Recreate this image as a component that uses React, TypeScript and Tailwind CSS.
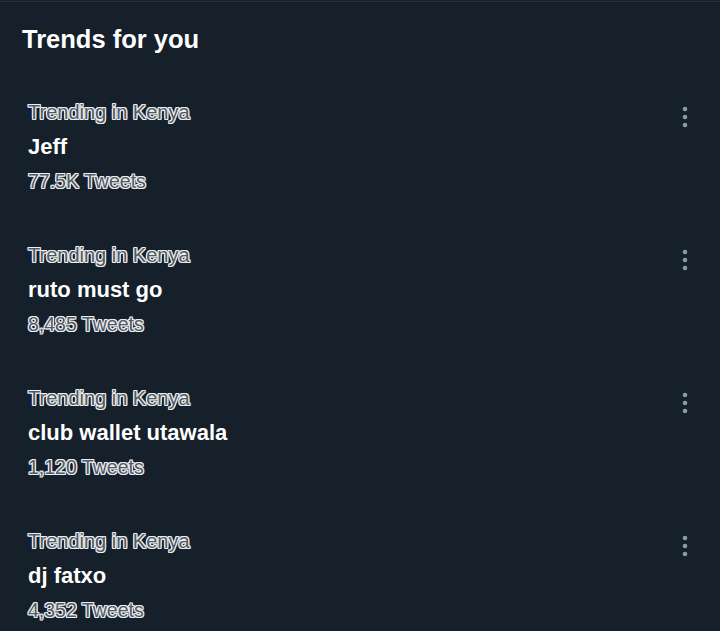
import React from 'react';

const trends = [
  { place: 'Trending in Kenya', name: 'Jeff', count: '77.5K Tweets' },
  { place: 'Trending in Kenya', name: 'ruto must go', count: '8,485 Tweets' },
  { place: 'Trending in Kenya', name: 'club wallet utawala', count: '1,120 Tweets' },
  { place: 'Trending in Kenya', name: 'dj fatxo', count: '4,352 Tweets' },
];

// gray text in the shot has a light halo round each glyph
const outlined =
  'text-[#4f5a65] [text-shadow:1px_0_#eceef0,-1px_0_#eceef0,0_1px_#eceef0,0_-1px_#eceef0,1px_1px_#eceef0,-1px_-1px_#eceef0,1px_-1px_#eceef0,-1px_1px_#eceef0]';

const MoreIcon = () => (
  <svg width="24" height="24" viewBox="0 0 24 24" className="text-[#8b98a5]">
    <circle cx="12" cy="4" r="2.3" fill="currentColor" />
    <circle cx="12" cy="12" r="2.3" fill="currentColor" />
    <circle cx="12" cy="20" r="2.3" fill="currentColor" />
  </svg>
);

const App = () => {
  return (
    <div className="min-h-screen w-[720px] h-[631px] overflow-hidden bg-[#15202b] font-['Liberation_Sans',Arial,sans-serif]">
      <div className="h-[1px] mt-[1px] bg-[#27323d]"></div>

      {/* Header */}
      <div className="px-[22px] pt-[21px] pb-[20px]">
        <h2 className="text-[25.5px] leading-[32px] font-bold text-white">Trends for you</h2>
      </div>

      {/* Trend list */}
      <div>
        {trends.map((t) => (
          <div key={t.name} className="flex justify-between pl-[28px] pr-[23px] py-[20px]">
            <div className="flex flex-col">
              <span className={`text-[20px] leading-[34px] ${outlined}`}>{t.place}</span>
              <span className="text-[22px] leading-[35px] font-bold text-white">{t.name}</span>
              <span className={`text-[19.5px] leading-[34px] ${outlined}`}>{t.count}</span>
            </div>
            <div className="pt-[10px]">
              <MoreIcon />
            </div>
          </div>
        ))}
      </div>
    </div>
  );
};

export default App;
